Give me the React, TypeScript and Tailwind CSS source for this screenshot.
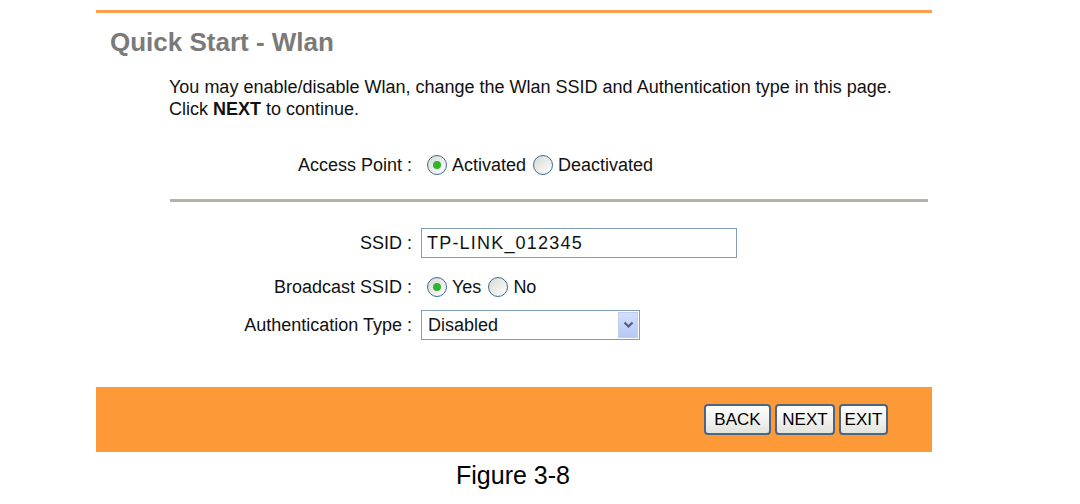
import { useState } from "react"

function Radio({ checked, label, onClick }: { checked: boolean; label: string; onClick: () => void }) {
  return (
    <label className="flex items-center cursor-pointer" onClick={onClick}>
      <span className="flex items-center justify-center w-[20px] h-[20px] rounded-full border-[1.5px] border-[#3f6b94] bg-gradient-to-br from-[#d8d8d2] to-white mr-[5px]">
        {checked && <span className="w-[8px] h-[8px] rounded-full bg-[#2fb52f]" />}
      </span>
      <span className="mr-[7px]">{label}</span>
    </label>
  )
}

function Btn({ text, w }: { text: string; w: string }) {
  return (
    <button className={`${w} h-[31px] rounded-[4px] border-[2px] border-[#4b6682] bg-gradient-to-b from-white to-[#e4e4de] text-[17px] text-black leading-none`}>
      {text}
    </button>
  )
}

export default function App() {
  const [ap, setAp] = useState(true)
  const [bc, setBc] = useState(true)
  const [ssid, setSsid] = useState('TP-LINK_012345')

  return (
    <div className="w-[1080px] h-[504px] bg-white pt-[10px]" style={{ fontFamily: '"Liberation Sans", Arial, sans-serif' }}>
      <div className="ml-[96px] w-[836px]">
        <div className="h-[3px] bg-[#f9a04c]" />
        <h1 className="mt-[15px] ml-[14px] h-[28px] leading-[28px] text-[26px] font-bold text-[#7a7a7a]">Quick Start - Wlan</h1>

        <div className="mt-[20px] ml-[73px] text-[18px] leading-[22px] text-[#111]">
          <p>You may enable/disable Wlan, change the Wlan SSID and Authentication type in this page.</p>
          <p>Click <b>NEXT</b> to continue.</p>
        </div>

        <div className="mt-[33px] flex items-center h-[24px] text-[18px] text-[#111]">
          <div className="w-[318px] text-right pr-[2px]">Access Point :</div>
          <div className="ml-[13px] flex items-center">
            <Radio checked={ap} label="Activated" onClick={() => setAp(true)} />
            <Radio checked={!ap} label="Deactivated" onClick={() => setAp(false)} />
          </div>
        </div>

        <div className="mt-[22px] ml-[74px] w-[758px] h-[3px] bg-[#b4b2a8]" />

        <div className="mt-[26px] flex items-center h-[30px] text-[18px] text-[#111]">
          <div className="w-[318px] text-right pr-[2px]">SSID :</div>
          <input
            value={ssid}
            onChange={(e) => setSsid(e.target.value)}
            className="ml-[7px] w-[316px] h-[30px] border border-[#7f9db9] px-[5px] text-[18px] tracking-[1.2px] outline-none"
          />
        </div>

        <div className="mt-[17px] flex items-center h-[24px] text-[18px] text-[#111]">
          <div className="w-[318px] text-right pr-[2px]">Broadcast SSID :</div>
          <div className="ml-[13px] flex items-center">
            <Radio checked={bc} label="Yes" onClick={() => setBc(true)} />
            <Radio checked={!bc} label="No" onClick={() => setBc(false)} />
          </div>
        </div>

        <div className="mt-[11px] flex items-center h-[30px] text-[18px] text-[#111]">
          <div className="w-[318px] text-right pr-[2px]">Authentication Type :</div>
          <div className="ml-[7px] w-[219px] h-[30px] border border-[#7f9db9] flex items-center justify-between">
            <span className="pl-[6px]">Disabled</span>
            <span className="w-[20px] h-[26px] mr-[1px] bg-gradient-to-b from-[#d2defc] to-[#b6c9f5] border border-[#c0cdeb] flex items-center justify-center">
              <svg width="11" height="8" viewBox="0 0 11 8">
                <path d="M1.5 1.5 L5.5 5.5 L9.5 1.5" stroke="#4d6185" strokeWidth="2.2" fill="none" />
              </svg>
            </span>
          </div>
        </div>

        <div className="mt-[47px] h-[65px] bg-[#fd9a37] flex items-center justify-end pr-[44px] gap-[4px]">
          <Btn text="BACK" w="w-[67px]" />
          <Btn text="NEXT" w="w-[60px]" />
          <Btn text="EXIT" w="w-[49px]" />
        </div>
      </div>

      <div className="mt-[8px] h-[30px] leading-[30px] text-center text-[25px] text-black w-[1026px]">Figure 3-8</div>
    </div>
  )
}
